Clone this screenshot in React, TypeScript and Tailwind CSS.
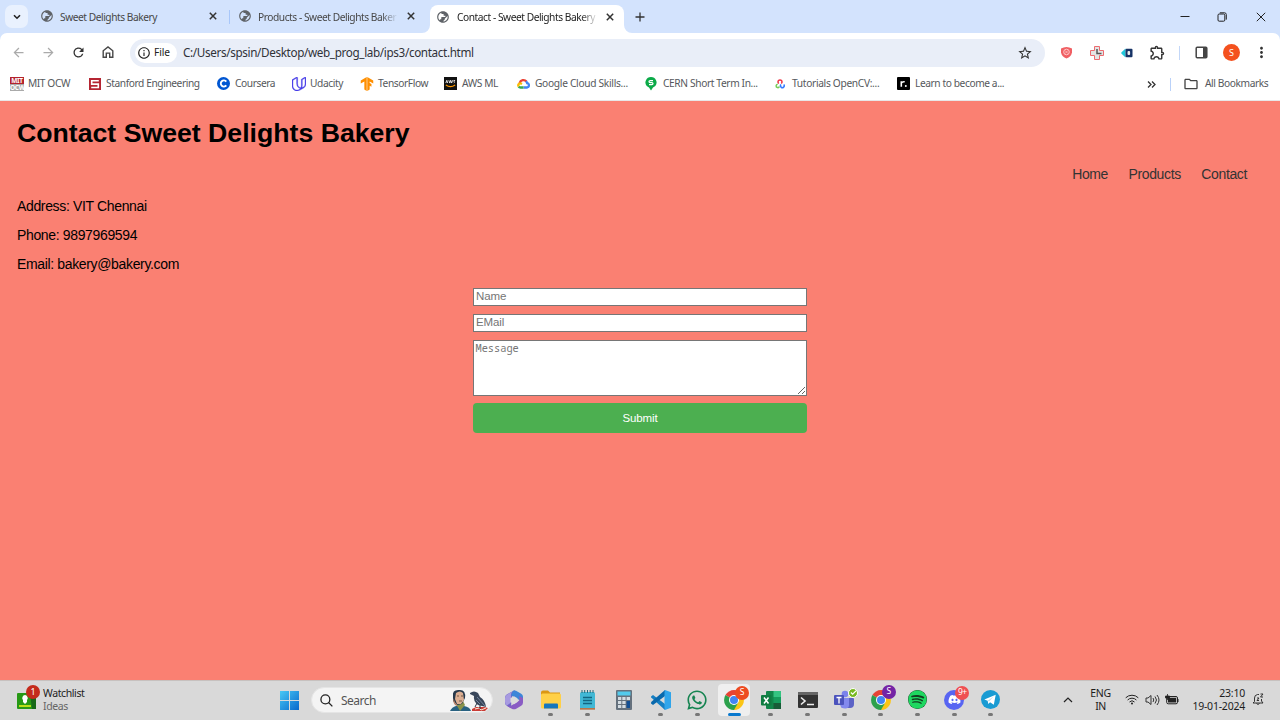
import type { ReactNode } from 'react';
import { MdPublic, MdArrowBack, MdArrowForward, MdRefresh, MdStarOutline, MdMoreVert, MdOutlineFolder, MdOutlineExtension, MdOutlineInfo } from 'react-icons/md';
import { SiUdacity, SiTensorflow } from 'react-icons/si';
import { FaWhatsapp, FaDiscord, FaSpotify } from 'react-icons/fa';

type Box = { className?: string; children?: ReactNode };

const Cross = ({ className = '' }: Box) => (
  <svg viewBox="0 0 8 8" className={`h-[8px] w-[8px] shrink-0 ${className}`} fill="none" stroke="#333" strokeWidth="1.5">
    <path d="M.8.8l6.4 6.4M7.2.8L.8 7.2" />
  </svg>
);

const Globe = () => <MdPublic className="size-[14px] shrink-0 -scale-x-100 text-[#5f6368]" />;

function TabStrip() {
  return (
    <div className="flex h-[33px] items-center bg-[#d3e3fd] text-[10.2px] text-[#474747]">
      <div className="ml-[5px] flex size-[23px] items-center justify-center rounded-[7px] bg-[#e9f1fe]">
        <svg viewBox="0 0 8 6" className="h-[6px] w-[8px]" fill="none" stroke="#222" strokeWidth="1.6"><path d="M1 1.2l3 3 3-3" /></svg>
      </div>
      <div className="ml-[12px] flex w-[189px] items-center">
        <Globe />
        <span className="ml-[6px] w-[149px] pt-[2px] whitespace-nowrap tracking-[-0.45px]">Sweet Delights Bakery</span>
        <Cross />
      </div>
      <div className="h-[14px] w-px bg-[#a8c7fa]" />
      <div className="ml-[8px] flex w-[192px] items-center">
        <Globe />
        <span className="ml-[6px] w-[140px] pt-[2px] whitespace-nowrap tracking-[-0.45px] [mask-image:linear-gradient(to_right,black_88%,transparent_100%)]">Products - Sweet Delights Baker</span>
        <Cross className="ml-[9px]" />
      </div>
      <div className="relative flex h-[28px] w-[194px] items-center self-end rounded-t-[8px] bg-white pb-[4px] pl-[6px] text-[#222]">
        <svg viewBox="0 0 8 8" className="absolute bottom-0 -left-[8px] size-[8px]"><path d="M8 0v8H0a8 8 0 0 0 8-8" fill="#fff" /></svg>
        <svg viewBox="0 0 8 8" className="absolute -right-[8px] bottom-0 size-[8px]"><path d="M0 0v8h8a8 8 0 0 1-8-8" fill="#fff" /></svg>
        <Globe />
        <span className="ml-[7px] w-[141px] pt-px whitespace-nowrap tracking-[-0.45px] [mask-image:linear-gradient(to_right,black_88%,transparent_100%)]">Contact - Sweet Delights Bakery</span>
        <Cross className="ml-[8px]" />
      </div>
      <svg viewBox="0 0 10 10" className="ml-[11px] size-[10px]" fill="none" stroke="#333" strokeWidth="1.3"><path d="M5 .5v9M.5 5h9" /></svg>
      <svg viewBox="0 0 10 10" className="ml-auto size-[10px]" stroke="#222"><path d="M.5 4.500h9" /></svg>
      <svg viewBox="0 0 10 10" className="ml-[27px] size-[10px]" fill="none" stroke="#222"><rect x="1" y="2" width="6.8" height="7.2" rx="1.2" /><path d="M2.800.8h4.700q1.800 0 1.800 1.800v5" /></svg>
      <svg viewBox="0 0 10 10" className="mr-[14px] ml-[29px] size-[10px]" fill="none" stroke="#222"><path d="M.8.8l8.400 8.400M9.200.8L.8 9.200" /></svg>
    </div>
  );
}

function Toolbar() {
  return (
    <div className="bg-[#d3e3fd]">
      <div className="flex h-[39px] items-center rounded-t-[7px] bg-white text-[#474747]">
        <MdArrowBack className="ml-[11px] size-[15px] text-[#aaa]" />
        <MdArrowForward className="ml-[15px] size-[15px] text-[#aaa]" />
        <MdRefresh className="ml-[15px] size-[15px] text-[#333]" />
        <svg viewBox="0 0 12 12" className="mb-px ml-[16px] size-[12px]" fill="none" stroke="#474747" strokeWidth="1.4"><path d="M1.200 11.200V4.800L6 1l4.800 3.800v6.400H7.700V7.100H4.300v4.100z" /></svg>
        <div className="ml-[16px] flex h-[28px] w-[915px] items-center rounded-full bg-[#e9eef8]">
          <div className="ml-[5px] flex h-[20px] w-[42px] items-center rounded-full bg-white text-[10.200px] text-[#222]">
            <MdOutlineInfo className="mr-[3px] ml-[2px] size-[14px] shrink-0" />
            <span className="tracking-[-0.100px]">File</span>
          </div>
          <span className="ml-[6px] pt-px text-[11.700px] tracking-[-0.355px] whitespace-nowrap text-[#303238]">C:/Users/spsin/Desktop/web_prog_lab/ips3/contact.html</span>
          <MdStarOutline className="mr-[12px] ml-auto size-[16px] text-[#333]" />
        </div>
        <svg viewBox="0 0 13 13" className="ml-[15px] size-[13px]" fill="none"><path d="M1 2.500Q6.500-.5 12 2.500v4Q11 11 6.500 12.500 2 11 1 6.500z" fill="#f05f63" /><circle cx="6.500" cy="6" r="2.800" stroke="#ffd1d2" strokeWidth=".9" /><path d="M5.200 4.800l2.600 2.400M7.800 4.800L5.200 7.200" stroke="#ffd1d2" strokeWidth=".7" /></svg>
        <svg viewBox="0 0 14 14" className="ml-[17px] size-[14px]"><path d="M4.500.5h5v4h4v5h-4v4h-5v-4h-4v-5h4z" fill="#e4e4e4" stroke="#ed6b6f" /><path d="M7 3v4.500h4.500" fill="none" stroke="#555" strokeWidth="1.500" /></svg>
        <svg viewBox="0 0 12 10" className="ml-[17px] h-[10px] w-[12px]"><path d="M4.500.5v9L.3 5.500v-1z" fill="#1fc8db" /><rect x="4.500" y=".8" width="7" height="8.400" rx="1" fill="#173366" /><rect x="6.500" y="3" width="2.600" height="4" rx="1" fill="#eee" /></svg>
        <MdOutlineExtension className="ml-[16px] size-[17px] text-[#333]" />
        <div className="ml-[13px] h-[14px] w-px bg-[#c3d7f8]" />
        <svg viewBox="0 0 13 13" className="ml-[15px] size-[13px]"><rect x="1.200" y="1.200" width="10.600" height="10.600" rx="1" fill="none" stroke="#444" strokeWidth="1.500" /><path d="M8 1h4v11H8z" fill="#444" /></svg>
        <div className="ml-[15px] flex size-[17px] items-center justify-center rounded-full bg-[#f4511e] text-[9px] text-white">S</div>
        <MdMoreVert className="ml-[13px] size-[17px] text-[#333]" />
      </div>
    </div>
  );
}

const Mark = ({ className = '', children }: Box) => <div className={`flex shrink-0 items-center ${className}`}>{children}</div>;

function Bookmarks() {
  return (
    <div className="flex h-[29px] items-center border-b border-[#e8e8e8] bg-white pb-[4px] pl-[10px] text-[10.200px] tracking-[-0.410px] whitespace-nowrap text-[#55585c]">
      <Mark className="w-[79px] gap-[4px]">
        <span className="flex size-[14px] flex-col text-center text-[6.500px] leading-[7px] font-bold tracking-[-0.300px]">
          <span className="h-[7px] bg-[#b4232d] text-white">MIT</span><span className="h-[7px] bg-[#aaa] text-white">OCW</span>
        </span>MIT OCW
      </Mark>
      <Mark className="w-[128px] gap-[5px]">
        <svg viewBox="0 0 12 12" className="size-[12px]"><rect width="12" height="12" fill="#b52532" /><path d="M9.800 2.800H2.700v3.300h6.600v3.400H2.200" fill="none" stroke="#fff" strokeWidth="1.600" /></svg>Stanford Engineering
      </Mark>
      <Mark className="w-[75px] gap-[5px]">
        <svg viewBox="0 0 14 14" className="size-[13px]"><circle cx="7" cy="7" r="7" fill="#0056d2" /><path d="M10 5a3.300 3.300 0 1 0 0 4" fill="none" stroke="#fff" strokeWidth="2" /></svg>Coursera
      </Mark>
      <Mark className="w-[68px] gap-[4px]"><SiUdacity className="size-[14px] stroke-[#463ce8] stroke-[0.700] text-[#463ce8]" />Udacity</Mark>
      <Mark className="w-[84px] gap-[4px]"><SiTensorflow className="size-[14px] text-[#ff8f00]" />TensorFlow</Mark>
      <Mark className="w-[73px] gap-[5px]">
        <svg viewBox="0 0 14 14" className="size-[13px]"><rect width="14" height="14" fill="#111" /><path d="M2 6.500l1-3 1 3M5.200 3.500l1 3 1-3 1 3 1-3M12 3.900q-2-.8-1.500.8 2 .7 0 1.600" fill="none" stroke="#eee" strokeWidth="1" /><path d="M2 8.500q5 3.500 10 0" fill="none" stroke="#f90" strokeWidth="1.300" /></svg>AWS ML
      </Mark>
      <Mark className="w-[128px] gap-[5px] tracking-[-0.300px]">
        <svg viewBox="0 0 13 11" className="h-[11px] w-[13px]" fill="none" strokeWidth="2.300"><path d="M2.600 5A4 4 0 0 1 9.500 3.500" stroke="#ea4335" /><path d="M9 3.200q1 1 1.200 2a2.200 2.200 0 0 1 0 4.300H6.500" stroke="#4285f4" /><path d="M6.500 9.500H3.500q-1.200 0-1.900-1" stroke="#34a853" /><path d="M1.600 8.500C.5 6.500 2.500 4.500 5 6" stroke="#fbbc04" /></svg>Google Cloud Skills...
      </Mark>
      <Mark className="w-[130px] gap-[6px] tracking-[-0.370px]">
        <svg viewBox="0 0 12 14" className="h-[14px] w-[12px]"><path d="M6 0a5.500 5.500 0 0 1 4.300 9L8 10.500 6 13.500l-2-3L1.700 9A5.500 5.500 0 0 1 6 0" fill="#0baa48" /><path d="M8 3.600H5.200Q4 3.600 4 4.600t1.100 1h1.800q1.100 0 1.100 1t-1.100 1H4" fill="none" stroke="#fff" strokeWidth="1.200" /></svg>CERN Short Term In...
      </Mark>
      <Mark className="w-[122px] gap-[7px] tracking-[-0.320px]">
        <svg viewBox="0 0 10 10" className="size-[10px]" fill="none" strokeWidth="1.500"><path d="M3.800 4.500a2 2 0 1 1 2.400 0" stroke="#ee3344" /><path d="M2.700 5.200a1.700 1.700 0 1 0 1.700 2.300" stroke="#74cd58" /><path d="M6 5.600a1.800 1.800 0 1 0 2.700 0" stroke="#357bff" /></svg>Tutorials OpenCV:...
      </Mark>
      <Mark className="gap-[5px]">
        <svg viewBox="0 0 13 13" className="size-[13px]"><rect width="13" height="13" rx="1" fill="#000" /><path d="M4.300 9.800V4.300M4.500 6q.7-1.500 3.200-1.200" stroke="#fff" strokeWidth="1.600" fill="none" /><circle cx="8.800" cy="9" r="1" fill="#fff" /></svg>Learn to become a...
      </Mark>
      <svg viewBox="0 0 9 7" className="ml-auto h-[7px] w-[9px]" fill="none" stroke="#333" strokeWidth="1.300"><path d="M1 .5l3 3-3 3M5 .5l3 3-3 3" /></svg>
      <div className="ml-[14px] h-[13px] w-px bg-[#b9d1f9]" />
      <MdOutlineFolder className="ml-[12px] size-[16px] text-[#444]" />
      <span className="mr-[12px] ml-[6px] w-[63px]">All Bookmarks</span>
    </div>
  );
}

function ContactPage() {
  return (
    <main className="h-[579px] bg-[#fa8072] px-[17px] font-['Liberation_Sans',Arial,sans-serif] text-black">
      <h1 className="pt-[14px] text-[26.670px] leading-[36px] font-bold">Contact Sweet Delights Bakery</h1>
      <nav className="mt-[14px] mr-[16px] flex h-[18px] items-center justify-end gap-[20.500px] text-[14px] tracking-[-0.370px] text-[#333]">
        <a>Home</a><a>Products</a><a>Contact</a>
      </nav>
      <div className="mt-[14px] text-[14px] leading-[18px] tracking-[-0.350px]">
        <p className="mb-[11px]">Address: VIT Chennai</p>
        <p className="mb-[10.500px]">Phone: 9897969594</p>
        <p>Email: bakery@bakery.com</p>
      </div>
      <form className="mx-auto mt-[15.500px] flex w-[334px] flex-col text-[11.500px] tracking-[-0.100px]">
        <input placeholder="Name" className="h-[18px] rounded-none border border-[#767676] bg-white px-[2px] pb-[2px] placeholder:text-[#757575]" />
        <input placeholder="EMail" className="mt-[8px] h-[18px] rounded-none border border-[#767676] bg-white px-[2px] pb-[2px] placeholder:text-[#757575]" />
        <textarea placeholder="Message" className="mt-[8px] h-[56px] resize rounded-none border border-[#767676] bg-white px-[1.500px] py-px font-['Noto_Sans_Mono','DejaVu_Sans_Mono',monospace] text-[10.300px] leading-[13px] tracking-normal placeholder:text-[#757575]" />
        <button type="button" className="mt-[7px] h-[30px] rounded-[4px] bg-[#4caf50] pt-px text-white">Submit</button>
      </form>
    </main>
  );
}

const ChromeLogo = () => (
  <svg viewBox="0 0 20 20" className="size-[20px]"><path d="M10 10L1.400 5A10 10 0 0 1 18.600 5z" fill="#e74335" /><path d="M10 10l8.600-5A10 10 0 0 1 10 20z" fill="#fbc516" /><path d="M10 10v10A10 10 0 0 1 1.400 5z" fill="#2ca14c" /><path d="M10 5h8.600l-4.300 7.500z" fill="#fbc516" /><path d="M14.300 12.500L10 20l-4.300-7.500z" fill="#2ca14c" /><circle cx="10" cy="10" r="5" fill="#fff" /><circle cx="10" cy="10" r="4" fill="#4285f4" /></svg>
);

const Badge = ({ className = '', children }: Box) => (
  <span className={`absolute flex size-[14px] items-center justify-center rounded-full text-[8.500px] leading-none text-white ${className}`}>{children}</span>
);

const TaskIcon = ({ active = false, dot = true, children }: { active?: boolean; dot?: boolean; children: ReactNode }) => (
  <div className={`relative flex h-[32px] w-[32px] shrink-0 flex-col items-center rounded-[4px] pt-[6px] ${active ? 'bg-[#efefef]' : ''}`}>
    <div className="flex h-[20px] shrink-0 items-center">{children}</div>
    {dot && <div className={`mt-[3px] shrink-0 rounded-full ${active ? 'h-[3px] w-[13px] bg-[#0878ce]' : 'h-[3px] w-[5px] bg-[#777]'}`} />}
  </div>
);

function Apps() {
  return (
    <div className="mb-[2px] ml-[5px] flex items-center gap-[4.700px]">
      <TaskIcon dot={false}>
        <svg viewBox="0 0 20 20" className="size-[20px]">
          <path d="M11 0L3 4.200Q1 5.400 1 7.600v5.200q0 2 1.800 3L7 18.300 7.500 8z" fill="#7266c9" />
          <path d="M9 .8Q10.500 0 12 .8l5.200 3q1.800 1 1.800 3v5L12.500 8.500 7 5.200z" fill="#3d86d8" />
          <path d="M1 8q0-2.500 3-4l4-2.200Q6.500 4 7 6.500v6L3 15.500Q1 14 1 12z" fill="#a79ae0" />
          <path d="M19 8v4.500q0 2.200-1.800 3.200l-5 3q-2.200 1.200-4.400 0l-5-2.900q2.700.8 5-.6L14 11.500q2.500-1.500 1-5.500z" fill="#8a5cc4" />
          <path d="M10 6.200l3.500 2v3.900L10 14.200l-3.500-2.100V8.200z" fill="#dcdcdc" />
        </svg>
      </TaskIcon>
      <TaskIcon><svg viewBox="0 0 20 18" className="h-[19px] w-[20px]"><path d="M0 2Q0 0 2 0h5l2 2h10v5H0z" fill="#db9713" /><rect y="3" width="20" height="15" rx="1.500" fill="#ffd047" /><path d="M3 18v-4q0-1 1-1h12q1 0 1 1v4z" fill="#1677bd" /></svg></TaskIcon>
      <TaskIcon><svg viewBox="0 0 17 20" className="h-[20px] w-[17px]"><rect x="1" y="2" width="15" height="17" rx="1.500" fill="#41b8d5" /><path d="M1 18h15v1.700H1z" fill="#b57549" /><path d="M3 0v3m2.700-3v3m2.800-3v3m2.700-3v3M14 0v3" stroke="#286b79" /><path d="M4 7.500h9M4 10.500h9M4 13.500h9" stroke="#126681" strokeWidth="1.300" /></svg></TaskIcon>
      <TaskIcon dot={false}><svg viewBox="0 0 16 20" className="h-[20px] w-[16px]"><rect width="16" height="20" rx="1" fill="#65717d" /><path d="M1.500 1.500h13v4h-13z" fill="#52cbed" /><path d="M2 7h3.300v3H2zm4.300 0h3.300v3H6.300zM10.600 7H14v3h-3.400zM2 11h3.300v3H2zm4.300 0h3.300v3H6.300zM2 15h3.300v3H2zm4.300 0h3.300v3H6.300z" fill="#d4dce2" /><path d="M10.600 11H14v7h-3.400z" fill="#124f94" /></svg></TaskIcon>
      <TaskIcon><svg viewBox="0 0 20 20" className="size-[20px]"><path d="M0 6.500l2-1.500L14 14v6L.2 7.500z" fill="#157fc3" /><path d="M14 0v6L2 15l-2-1.500L.2 12z" fill="#0969ad" /><path d="M14 0l6 2.200v15.600L14 20l-.5-2V2z" fill="#30a5eb" /></svg></TaskIcon>
      <TaskIcon><FaWhatsapp className="size-[22px] text-[#168451]" /></TaskIcon>
      <TaskIcon active><ChromeLogo /><Badge className="top-[2px] left-[17px] bg-[#ed4b21]">S</Badge></TaskIcon>
      <TaskIcon><svg viewBox="0 0 20 20" className="size-[20px]"><rect x="5" y="1" width="15" height="18" rx="1" fill="#12864a" /><path d="M12.500 1H20v6h-7.500z" fill="#34c481" /><path d="M12.500 7H20v6h-7.500z" fill="#169c5b" /><path d="M12.500 13H20v6h-7.500z" fill="#185c37" /><rect y="5" width="10.500" height="10.500" rx="1" fill="#107c41" /><path d="M3 7.500l4.500 6M7.500 7.500L3 13.500" stroke="#fff" strokeWidth="1.500" /></svg></TaskIcon>
      <TaskIcon><svg viewBox="0 0 20 16" className="h-[16px] w-[20px]"><rect width="20" height="16" rx="1" fill="#333" /><path d="M0 0h20v3H0z" fill="#666" /><path d="M3 5.500l4 3.500-4 3.500M9 12.500h7" stroke="#eee" strokeWidth="1.600" fill="none" /></svg></TaskIcon>
      <TaskIcon><svg viewBox="0 0 20 20" className="size-[20px]"><circle cx="11" cy="4" r="3.300" fill="#7b83eb" /><path d="M7 8h12q1 0 1 1v5q0 4-4 4H9q-2 0-2-2z" fill="#5c63c6" /><path d="M9 8h6v7q0 3-3 3.500-5 .5-6-4z" fill="#8389ed" /><rect y="5" width="10" height="10" rx="1" fill="#4b53bc" /><path d="M2.500 7.500h5M5 7.500v6" stroke="#fff" strokeWidth="1.300" /></svg><Badge className="top-[4px] left-[20px] !size-[10px] border border-white bg-[#78b922]"><svg viewBox="0 0 8 8" className="size-[7px]" fill="none" stroke="#fff" strokeWidth="1.300"><path d="M1 4l2 2 4-4" /></svg></Badge></TaskIcon>
      <TaskIcon><ChromeLogo /><Badge className="top-[1px] left-[17px] bg-[#7424a5]">S</Badge></TaskIcon>
      <TaskIcon><FaSpotify className="size-[19px] rounded-full bg-[#123d20] text-[#1ed760]" /></TaskIcon>
      <TaskIcon><div className="flex size-[20px] items-center justify-center rounded-full bg-[#5865f2]"><FaDiscord className="size-[13px] text-white" /></div><Badge className="top-[2px] left-[17px] bg-[#ef5052] tracking-[-0.500px]">9+</Badge></TaskIcon>
      <TaskIcon><svg viewBox="0 0 20 20" className="size-[19px]"><circle cx="10" cy="10" r="10" fill="#199bd3" /><path d="M3.500 10L15.500 5l-2 10.500L9.500 13l-1.800 1.700-.7-3.500z" fill="#fff" /><path d="M7 11.200l6.500-4.500-5 5.300" fill="#bbdcec" /></svg></TaskIcon>
    </div>
  );
}

function SearchArt() {
  return (
    <svg viewBox="0 0 39 23" className="mr-[3px] ml-auto h-[23px] w-[39px]">
      <path d="M0 22q2-4 6-5l8 0q6 1 7 5z" fill="#286181" /><path d="M6 15l4 7 5-6-2-4z" fill="#89924b" /><path d="M3 7Q2 0 10 1q6 0 5 8l-3 6-5 1-4-4z" fill="#26384b" /><path d="M6 4q4-3 7 0l1 7-3 4H7L5 10z" fill="#dcae92" /><path d="M7 7h2m2 0h2M9 12h3" stroke="#543" strokeWidth=".8" /><path d="M3.500 9q1 5 4 7l-1 1q-4-2-3-8" fill="#b98268" />
      <path d="M20 4q4-3 8 0l2 4q5 3 6 10l-8-2q-5-4-4-9l-4-2z" fill="#38465a" /><path d="M27 8l8 9M26 11l4 4" stroke="#71839c" /><path d="M22 20l4-2h8l4 1-3 3H22z" fill="#ca3c35" /><path d="M25 20l4-1 2 2 5-2" stroke="#f5e7d6" fill="none" /><path d="M27 14l-2 4m5-2v4" stroke="#263244" />
    </svg>
  );
}

function Taskbar() {
  return (
    <footer className="flex h-[40px] items-center border-t border-[#c7c1bf] bg-[#d9d9d9] text-[10.500px] text-[#1d1d1d]">
      <div className="relative mb-[2px] ml-[17px] flex h-[26px] w-[25px] items-end pb-[3px]">
        <svg viewBox="0 0 19 16" className="mb-px h-[16px] w-[19px]"><rect width="19" height="16" rx="1" fill="#279916" /><path d="M13 0h6v16h-4z" fill="#176919" /><path d="M2 12h12v2H2z" fill="#b8df18" /><path d="M8 2a3 3 0 0 0-2 5v2l2 2 2-2V7a3 3 0 0 0-2-5" fill="#fff" /></svg>
        <Badge className="-top-[2px] left-[9px] bg-[#c42b1c] !text-[9px]">1</Badge>
      </div>
      <div className="mb-[2px] ml-[1px] w-[237px] leading-[13px] tracking-[-0.400px]"><div>Watchlist</div><div className="text-[#666]">Ideas</div></div>
      <svg viewBox="0 0 19 19" className="size-[19px] shrink-0"><defs><linearGradient id="win" x2="1" y2="1"><stop stopColor="#46c8f5" /><stop offset="1" stopColor="#0868cc" /></linearGradient></defs><path d="M0 0h9v9H0zm10 0h9v9h-9zM0 10h9v9H0zm10 0h9v9h-9z" fill="url(#win)" /></svg>
      <div className="mb-px ml-[12px] flex h-[26px] w-[182px] shrink-0 items-center rounded-full border border-[#e5e5e5] bg-[#f4f4f4] pl-[8px]">
        <svg viewBox="0 0 14 14" className="size-[13px]" fill="none" stroke="#222" strokeWidth="1.400"><circle cx="5.800" cy="5.800" r="4.800" /><path d="M9.200 9.200L13.300 13.300" /></svg>
        <span className="ml-[8px] pt-px text-[12px] tracking-[-0.500px] text-[#555]">Search</span>
        <SearchArt />
      </div>
      <Apps />
      <svg viewBox="0 0 10 6" className="mb-[2px] ml-auto h-[6px] w-[10px]" fill="none" stroke="#222" strokeWidth="1.200"><path d="M1 5l4-4 4 4" /></svg>
      <div className="mb-[2px] ml-[14px] w-[27px] text-center leading-[13px] tracking-[-0.400px]">ENG<br />IN</div>
      <svg viewBox="0 0 14 11" className="mb-[2px] ml-[11px] h-[11px] w-[14px]" fill="none" stroke="#222"><path d="M.7 3.800a9 9 0 0 1 12.600 0M2.600 6a6.200 6.200 0 0 1 8.800 0M4.500 8a3.500 3.500 0 0 1 5 0" /><circle cx="7" cy="9.600" r="1" fill="#222" stroke="none" /></svg>
      <svg viewBox="0 0 15 12" className="mb-[2px] ml-[6px] h-[12px] w-[15px]" fill="none" stroke="#333"><path d="M1 4h2l3-2.500v9L3 8H1zM8 4q1.500 2 0 4M10 2.500q3 3.500 0 7M12 1q4 5 0 10" /></svg>
      <svg viewBox="0 0 14 11" className="mb-[2px] ml-[5px] h-[11px] w-[14px]"><rect x="1.700" y="2.500" width="10.800" height="7.300" rx="1.500" fill="none" stroke="#222" /><path d="M3 3.800h8.200v4.700H3zM12.500 5h1v3h-1z" fill="#222" /><path d="M2.500 0v6M.5 2h4v2h-4z" stroke="#222" fill="#222" strokeWidth=".8" /></svg>
      <div className="mb-[2px] ml-[12px] w-[54px] text-right leading-[13px] tracking-[-0.220px] whitespace-nowrap">23:10<br />19-01-2024</div>
      <svg viewBox="0 0 12 13" className="mr-[16px] mb-[2px] ml-[7px] h-[13px] w-[12px]" fill="none" stroke="#222"><path d="M7 1.500H5.500Q2.500 2 2.500 5v3.500L1 10h10L9.500 8V6M4.500 10.500q1.500 2 3 0M8.500 1H11L8.500 4H11M5 5h2L5 7.500h2" strokeWidth=".9" /></svg>
    </footer>
  );
}

export default function App() {
  return (
    <div className="flex h-[720px] w-[1280px] flex-col overflow-hidden bg-white font-['Noto_Sans','Open_Sans',sans-serif]">
      <TabStrip />
      <Toolbar />
      <Bookmarks />
      <ContactPage />
      <Taskbar />
    </div>
  );
}
